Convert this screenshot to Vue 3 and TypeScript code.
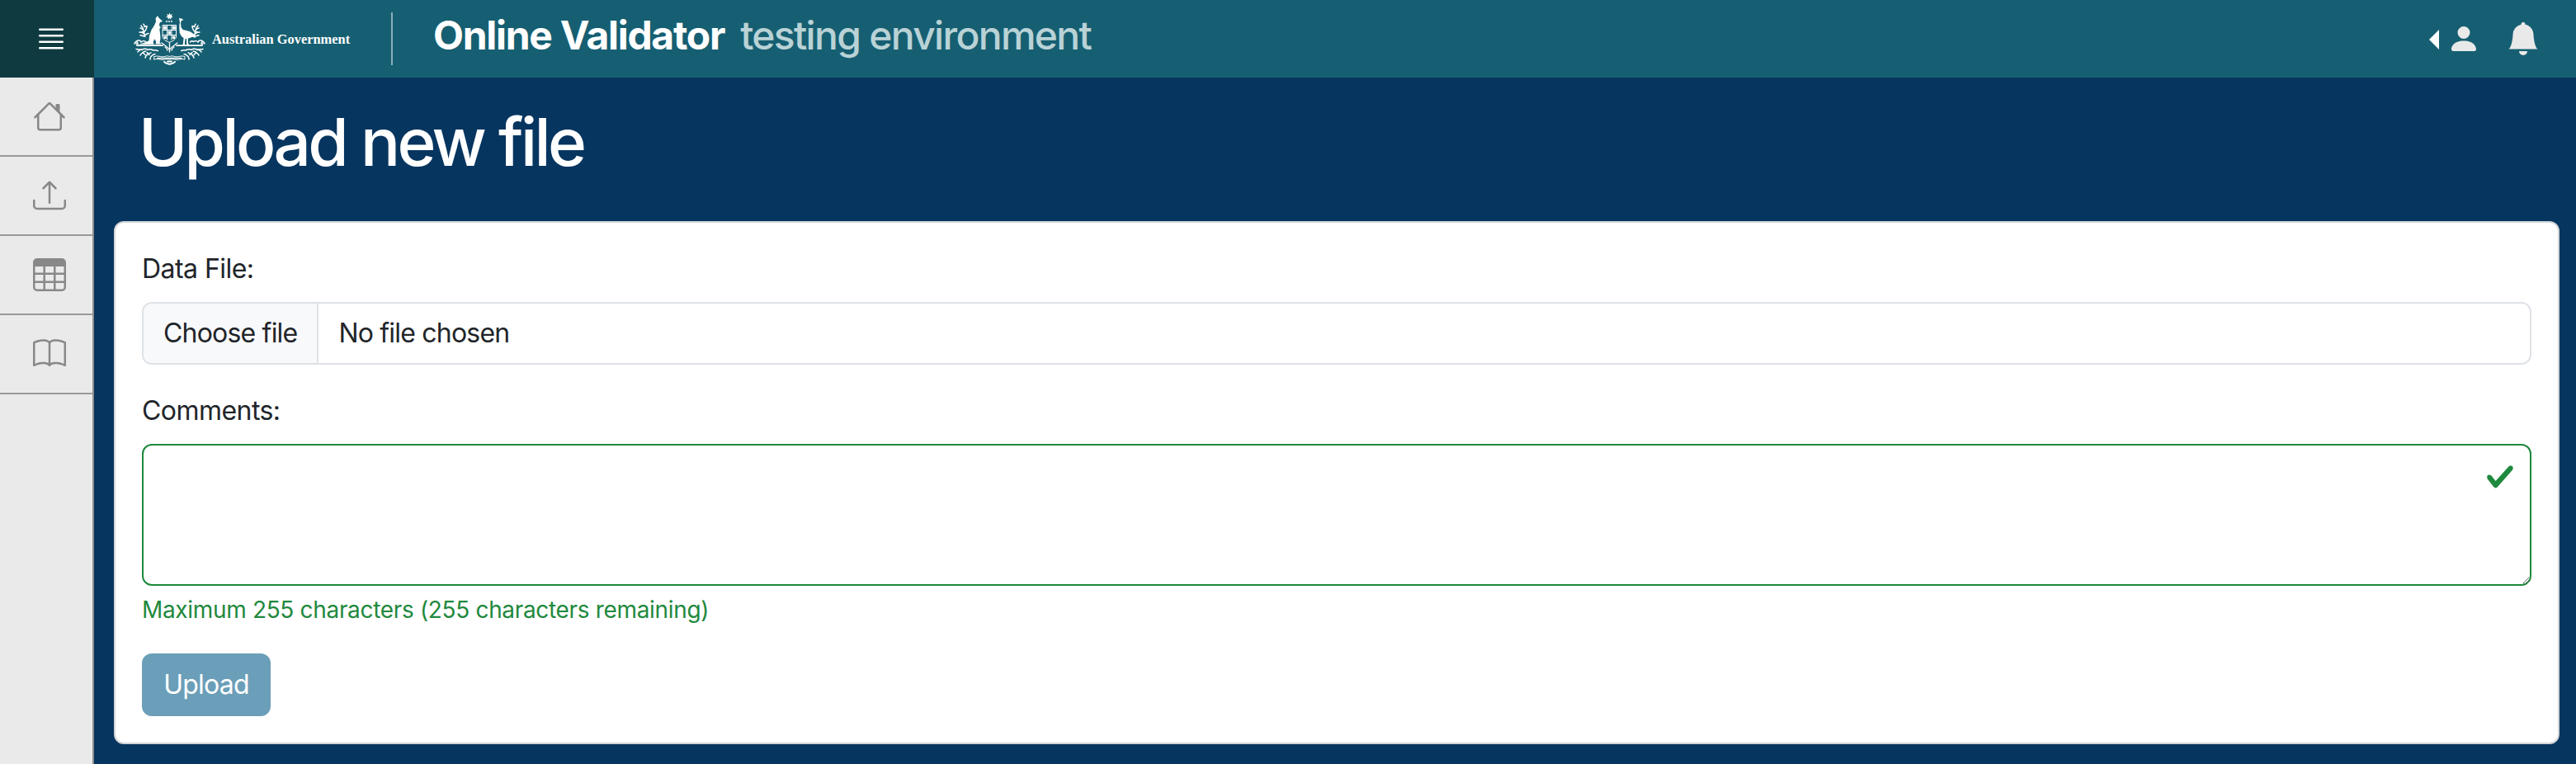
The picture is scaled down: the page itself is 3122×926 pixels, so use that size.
<script setup lang="ts">
interface NavItem { name: string; paths: string[] }

const nav: NavItem[] = [
  { name: 'Home', paths: [
    'M2 13.5V7h1v6.5a.5.5 0 0 0 .5.5h9a.5.5 0 0 0 .5-.5V7h1v6.5a1.5 1.5 0 0 1-1.5 1.5h-9A1.5 1.5 0 0 1 2 13.5zm11-11V6l-2-2V2.5a.5.5 0 0 1 .5-.5h1a.5.5 0 0 1 .5.5z',
    'M7.293 1.5a1 1 0 0 1 1.414 0l6.647 6.646a.5.5 0 0 1-.708.708L8 2.207 1.354 8.854a.5.5 0 1 1-.708-.708L7.293 1.5z'
  ] },
  { name: 'Upload', paths: [
    'M.5 9.9a.5.5 0 0 1 .5.5v2.5a1 1 0 0 0 1 1h12a1 1 0 0 0 1-1v-2.5a.5.5 0 0 1 1 0v2.5a2 2 0 0 1-2 2H2a2 2 0 0 1-2-2v-2.5a.5.5 0 0 1 .5-.5z',
    'M7.646 1.146a.5.5 0 0 1 .708 0l3 3a.5.5 0 0 1-.708.708L8.5 2.707V11.5a.5.5 0 0 1-1 0V2.707L5.354 4.854a.5.5 0 1 1-.708-.708l3-3z'
  ] },
  { name: 'Table', paths: [
    'M0 2a2 2 0 0 1 2-2h12a2 2 0 0 1 2 2v12a2 2 0 0 1-2 2H2a2 2 0 0 1-2-2V2zm15 2h-4v3h4V4zm0 4h-4v3h4V8zm0 4h-4v3h3a1 1 0 0 0 1-1v-2zm-5 3v-3H6v3h4zm-5 0v-3H1v2a1 1 0 0 0 1 1h3zm-4-4h4V8H1v3zm0-4h4V4H1v3zm5-3v3h4V4H6zm4 4H6v3h4V8z'
  ] },
  { name: 'Guide', paths: [
    'M1 2.828c.885-.37 2.154-.769 3.388-.893 1.33-.134 2.458.063 3.112.752v9.746c-.935-.53-2.12-.603-3.213-.493-1.18.12-2.37.461-3.287.811V2.828zm7.5-.141c.654-.689 1.782-.886 3.112-.752 1.234.124 2.503.523 3.388.893v9.923c-.918-.35-2.107-.692-3.287-.81-1.094-.111-2.278-.039-3.213.492V2.687zM8 1.783C7.015.936 5.587.81 4.287.94c-1.514.153-3.042.672-3.994 1.105A.5.5 0 0 0 0 2.5v11a.5.5 0 0 0 .707.455c.882-.4 2.303-.881 3.68-1.02 1.409-.142 2.59.087 3.223.877a.5.5 0 0 0 .78 0c.633-.79 1.814-1.019 3.222-.877 1.378.139 2.8.62 3.681 1.02A.5.5 0 0 0 16 13.5v-11a.5.5 0 0 0-.293-.455c-.952-.433-2.48-.952-3.994-1.105C10.413.809 8.985.936 8 1.783z'
  ] }
]
</script>

<template>
  <div class="page">
    <header class="topbar">
      <button class="menu" type="button" aria-label="Menu">
        <svg viewBox="0 0 16 16" width="40" height="40" fill="#fff">
          <path fill-rule="evenodd" d="M2 12.5a.5.5 0 0 1 .5-.5h11a.5.5 0 0 1 0 1h-11a.5.5 0 0 1-.5-.5zm0-3a.5.5 0 0 1 .5-.5h11a.5.5 0 0 1 0 1h-11a.5.5 0 0 1-.5-.5zm0-3a.5.5 0 0 1 .5-.5h11a.5.5 0 0 1 0 1h-11a.5.5 0 0 1-.5-.5zm0-3a.5.5 0 0 1 .5-.5h11a.5.5 0 0 1 0 1h-11a.5.5 0 0 1-.5-.5z" />
        </svg>
      </button>
      <div class="bar">
        <div class="gov">
          <svg class="crest" viewBox="0 0 87 64" width="87" height="64" aria-hidden="true">
            <path fill="#fff" d="M43.500 .5l1 2.400 2.500-.8-1.200 2.300 2.100 1.400-2.600.4.2 2.600-2-1.800-2 1.800.2-2.600-2.600-.4 2.100-1.400-1.200-2.300 2.500.8z" />
            <path stroke="#fff" stroke-width="1.600" stroke-dasharray="2 1" d="M39 11h9" fill="none" />
            <!-- kangaroo -->
            <path fill="#fff" d="M28.800 4l1.800 2.800 3.900 3.400.2 1-2.600.5-1 2.600.3 2.700 1.500 1-1.600 2 .8 6 .4 6-1 4 1.800 2.400-6.600.2.400-3.400-2-3-1.500 4.400 1.200 2.200H6l7-2 5.500-2.500.5-6 2.500-7 3.500-5.500 2-4.600-.4-3.600z" />
            <!-- emu -->
            <path fill="#fff" d="M55 7l3.200.6 2.300 1.700-2.700.7-.8 3 .5 5 2.200 3 4.300 1 5 1.600 3.600 3 2.600 4.400-4.200-1.200-2.200 1-3 .8.2 5.800 1.200 2.200-3 .1-.2-7.800-1.400.2-.8 5.800.6 2-2.800-.1 1-8.600-2.800-2.400-2-3.800-.4-5 0-5 .6-2.400z" />
            <!-- shield -->
            <g fill="none" stroke="#fff" stroke-width="1">
              <path d="M35 15.500h16.500v13.500c0 3.400-4 5.800-8.200 7.400-4.300-1.600-8.300-4-8.300-7.400z" />
              <path d="M40.600 15.500v18M46 15.500v18M35 21.500h16.500M35 27.500h16.500" />
            </g>
            <g fill="#fff">
              <rect x="36" y="16.600" width="3.800" height="4" />
              <rect x="47" y="16.600" width="3.800" height="4" />
              <rect x="41.600" y="22.600" width="3.600" height="4" />
              <rect x="36.500" y="28.600" width="3.200" height="3.400" />
              <rect x="47" y="28.600" width="3.200" height="3.400" />
            </g>
            <g fill="none" stroke="#fff" stroke-width="1.500" stroke-linecap="round">
              <!-- upper foliage -->
              <path d="M9 16c2 3 4 6 4 12m-5-9c2 .5 4 2 5 4m-6 1c2 0 4 .5 6 2.500m3-10c0 2-1 4-2 6m4 3c-1.500.3-3 1-4 2m-4-4l2 .2m1-6l2-1m-7 11l6 1.500m-2-15l1 2" stroke-dasharray="2.200 .7" />
              <path d="M78 16c-2 3-4 6-4 12m5-9c-2 .5-4 2-5 4m6 1c-2 0-4 .5-6 2.500m-3-10c0 2 1 4 2 6m-4 3c1.500.3 3 1 4 2m4-4l-2 .2m-1-6l-2-1m7 11l-6 1.500m2-15l-1 2" stroke-dasharray="2.200 .7" />
              <!-- ground scrolls -->
              <path d="M1 38c0-2.500 3.500-3 4-.8.3 1.500-2 1.800-2 .6M3 35c3-2 5-.8 6 1 1.500-1.600 4-1.800 5.500-.5" />
              <path d="M86 38c0-2.500-3.500-3-4-.8-.3 1.500 2 1.800 2 .6M84 35c-3-2-5-.8-6 1-1.500-1.600-4-1.800-5.500-.5-1.300-1.300-3-1-4 .5" />
              <path d="M4 40.200h31M52 40.200h31" stroke-width="1.800" />
              <!-- centre tree -->
              <path d="M34 37c3 2.500 6 3.500 9.500 8.500 3.500-5 6.500-6 9.500-8.500M43.500 37v11M38 42c1.500 1 2.500 2.200 3 4M49 42c-1.500 1-2.500 2.200-3 4" stroke-width="1.300" />
              <!-- lower wreath -->
              <path d="M3 44.500c3 .8 5 0 7 .8 2-1.500 5-1.300 7 0 2.500-1 5-.5 7 .8 2-.5 4-.3 6 1M5 48c2-2.500 4-3 6-3m-3 7c2-3 4-4.500 7-5m-1 8c1-3 3-5 7-6m-1 8c0-3 2-5.500 6-6.500m-15-2l3 3m2-3l3 3" stroke-dasharray="2.300 .8" />
              <path d="M84 44.500c-3 .8-5 0-7 .8-2-1.500-5-1.300-7 0-2.500-1-5-.5-7 .8-2-.5-4-.3-6 1M82 48c-2-2.500-4-3-6-3m3 7c-2-3-4-4.500-7-5m1 8c-1-3-3-5-7-6m1 8c0-3-2-5.500-6-6.500m15-2l-3 3m-2-3l-3 3" stroke-dasharray="2.300 .8" />
              <!-- motto -->
              <path d="M25 53.500c4-1.400 7 .4 10 .4s5.500-2 8.500-.4c3-1.600 5.500.4 8.500.4s6-1.800 10-.4v3.500c-4-1.400-7 .4-10 .4s-5.500-1.600-8.500-.2c-3-1.400-5.500.2-8.500.2s-6-1.800-10-.4z" stroke-width="1" />
              <path d="M29 55.500h29" stroke-width="1.600" stroke-dasharray="1.800 .9" />
              <path d="M37 60c2 1.800 4 2.200 6.500 2.800 2.500-.6 4.500-1 6.500-2.800M41 59.500h5" stroke-width="2" />
            </g>
          </svg>
          <span class="gov-name">Australian Government</span>
        </div>
        <span class="rule"></span>
        <div class="title">
          <strong>Online Validator</strong>
          <span>testing environment</span>
        </div>
        <div class="actions">
          <div class="user">
            <span class="caret"></span>
            <svg viewBox="0 0 16 16" width="40" height="40" fill="#e9e9e9" aria-hidden="true">
              <path d="M3 14s-1 0-1-1 1-4 6-4 6 3 6 4-1 1-1 1H3zm5-6a3 3 0 1 0 0-6 3 3 0 0 0 0 6z" />
            </svg>
          </div>
          <svg viewBox="0 0 16 16" width="40" height="40" fill="#e9e9e9" aria-hidden="true">
            <path d="M8 16a2 2 0 0 0 2-2H6a2 2 0 0 0 2 2zm.995-14.901a1 1 0 1 0-1.99 0A5.002 5.002 0 0 0 3 6c0 1.098-.5 6-2 7h14c-1.500-1-2-5.902-2-7 0-2.420-1.720-4.440-4.005-4.901z" />
          </svg>
        </div>
      </div>
    </header>

    <div class="body">
      <nav class="side">
        <a v-for="item in nav" :key="item.name" class="side-item" :aria-label="item.name">
          <svg viewBox="0 0 16 16" width="40" height="40" fill="#888" aria-hidden="true">
            <path v-for="(d, i) in item.paths" :key="i" :d="d" />
          </svg>
        </a>
      </nav>

      <main class="main">
        <h1>Upload new file</h1>
        <form class="card" @submit.prevent>
          <div class="field">
            <label class="lbl">Data File:</label>
            <div class="file">
              <span class="file-btn">Choose file</span>
              <span class="file-name">No file chosen</span>
            </div>
          </div>
          <div class="field">
            <label class="lbl" for="comments">Comments:</label>
            <div class="area-wrap">
              <textarea id="comments" class="area"></textarea>
              <svg class="check" viewBox="0 0 8 8" width="36" height="36" aria-hidden="true">
                <path fill="#1f893d" d="M2.300 6.730.6 4.530c-.4-1.040.46-1.400 1.100-.8l1.100 1.400 3.400-3.800c.6-.63 1.600-.27 1.200.7l-4 4.600c-.43.5-.8.4-1.100.1z" />
              </svg>
            </div>
            <div class="hint">Maximum 255 characters (255 characters remaining)</div>
          </div>
          <button class="upload" type="submit">Upload</button>
        </form>
      </main>
    </div>
  </div>
</template>

<style>
html, body { margin: 0; background: #06355f; }
</style>

<style scoped>
.page {
  width: 3122px;
  height: 926px;
  overflow: hidden;
  display: flex;
  flex-direction: column;
  font-family: Inter, "Liberation Sans", sans-serif;
  font-size: 32px;
  line-height: 1.5;
  letter-spacing: -0.55px;
  color: #212529;
  background: #06355f;
}
.topbar { display: flex; height: 94px; flex: none; }
.menu {
  width: 114px;
  border: 0;
  padding: 0;
  background: #0f3b40;
  display: flex;
  align-items: center;
  justify-content: center;
  flex: none;
}
.menu svg { margin-left: 10px; }
.bar {
  flex: 1;
  display: flex;
  align-items: center;
  padding-left: 48px;
  padding-right: 44px;
  background: #165f72;
  color: #fff;
}
.gov { display: flex; align-items: center; }
.crest { display: block; }
.gov-name {
  margin-left: 8px;
  margin-top: 2px;
  font-family: "Liberation Serif", serif;
  font-weight: 700;
  font-size: 16.4px;
  letter-spacing: 0;
  line-height: 1;
  white-space: nowrap;
}
.rule {
  width: 2px;
  height: 64px;
  margin-left: 50px;
  background: rgba(255, 255, 255, 0.5);
}
.title {
  margin-left: 49px;
  display: flex;
  align-items: baseline;
  gap: 19px;
  font-size: 48px;
  line-height: 1.2;
  margin-top: -8px;
  letter-spacing: -1.3px;
}
.title strong { font-weight: 700; }
.title span { color: #b9d2d6; font-weight: 500; letter-spacing: -1.7px; }
.actions {
  margin-left: auto;
  display: flex;
  align-items: center;
  gap: 32px;
}
.user { display: flex; align-items: center; gap: 10px; }
.caret {
  width: 0;
  height: 0;
  border-top: 12px solid transparent;
  border-bottom: 12px solid transparent;
  border-right: 12px solid #fff;
  margin-top: 2px;
}
.body { flex: 1; display: flex; min-height: 0; }
.side {
  width: 112px;
  flex: none;
  border-right: 2px solid #8e8e8e;
  background: #eaeaea;
}
.side-item {
  display: flex;
  align-items: center;
  height: 94px;
  padding-left: 40px;
  border-bottom: 2px solid #999;
  width: 72px;
}
.main { flex: 1; padding: 0 20px 0 24px; min-width: 0; }
h1 {
  margin: 0;
  padding: 30px 0 0 30px;
  height: 174px;
  box-sizing: border-box;
  font-size: 80px;
  font-weight: 500;
  line-height: 1.2;
  letter-spacing: -3.6px;
  color: #fff;
}
.card {
  box-sizing: border-box;
  padding: 32px;
  background: #fff;
  border: 2px solid #d3d5d7;
  border-radius: 12px;
  height: 634px;
}
.field { margin-bottom: 32px; }
.lbl { display: block; margin-bottom: 16px; }
.file {
  display: flex;
  height: 76px;
  box-sizing: border-box;
  border: 2px solid #dee2e6;
  border-radius: 12px;
  overflow: hidden;
  align-items: stretch;
}
.file-btn {
  display: flex;
  align-items: center;
  padding: 0 24px;
  background: #f8f9fa;
  border-right: 2px solid #dee2e6;
  letter-spacing: -0.8px;
}
.file-name { display: flex; align-items: center; padding-left: 24px; letter-spacing: -0.8px; }
.area-wrap { position: relative; }
.area {
  display: block;
  width: 100%;
  height: 172px;
  box-sizing: border-box;
  border: 2px solid #1f893d;
  border-radius: 12px;
  padding: 12px 24px;
  font: inherit;
  outline: none;
  resize: vertical;
}
.check { position: absolute; top: 22px; right: 20px; }
.hint { margin-top: 8px; font-size: 28px; letter-spacing: -0.33px; color: #1f893d; }
.upload {
  display: block;
  width: 156px;
  height: 76px;
  padding: 0;
  border: 0;
  border-radius: 12px;
  background: #6b9eb8;
  color: #fff;
  font: inherit;
  letter-spacing: -0.8px;
}
</style>
